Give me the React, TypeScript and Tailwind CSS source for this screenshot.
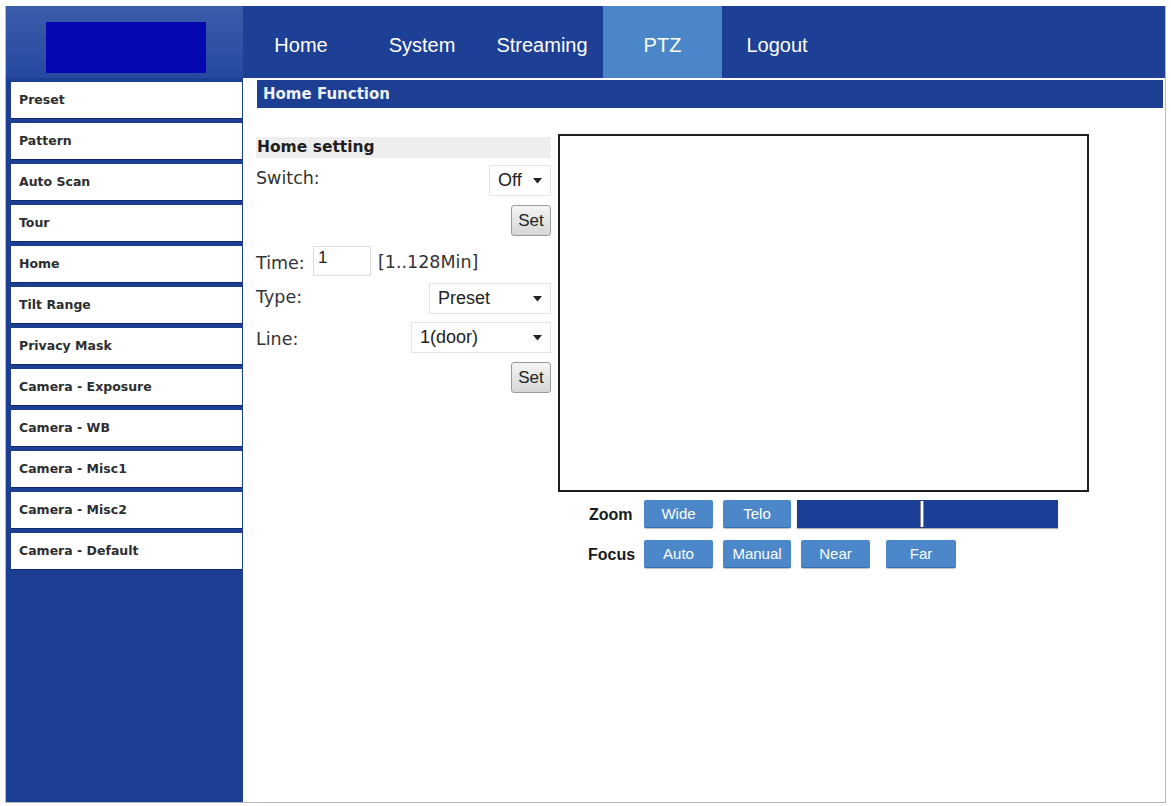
import React from "react";

const MENU = [
  "Preset",
  "Pattern",
  "Auto Scan",
  "Tour",
  "Home",
  "Tilt Range",
  "Privacy Mask",
  "Camera - Exposure",
  "Camera - WB",
  "Camera - Misc1",
  "Camera - Misc2",
  "Camera - Default",
];

const NAV = [
  { label: "Home", cls: "ml-[20px] w-[76px]" },
  { label: "System", cls: "ml-[45px] w-[76px]" },
  { label: "Streaming", cls: "ml-[31px] w-[102px]" },
  { label: "PTZ", cls: "ml-[10px] w-[119px] bg-[#4a86c8]" },
  { label: "Logout", cls: "ml-[15px] w-[80px]" },
];

const verdana = { fontFamily: '"DejaVu Sans", Verdana, sans-serif' };
const arial = { fontFamily: '"Liberation Sans", Arial, sans-serif' };

function Caret() {
  return (
    <svg width="9" height="6" viewBox="0 0 9 6" className="shrink-0">
      <path d="M0 0 H9 L4.5 5.5 Z" fill="#222" />
    </svg>
  );
}

function Select({ value, width }: { value: string; width: string }) {
  return (
    <div
      className={`${width} h-[31px] flex items-center justify-between pl-[8px] pr-[8px] bg-white border border-[#e4e4e4] text-[18px] text-[#222]`}
      style={arial}
    >
      <span>{value}</span>
      <Caret />
    </div>
  );
}

function SetButton() {
  return (
    <button
      className="w-[40px] h-[31px] rounded-[3px] border border-[#9a9a9a] bg-gradient-to-b from-[#f4f4f4] to-[#d6d6d6] text-[17px] text-[#222] leading-none"
      style={arial}
    >
      Set
    </button>
  );
}

function BlueButton({ label, width = "w-[69px]", className = "" }: { label: string; width?: string; className?: string }) {
  return (
    <button
      className={`${width} ${className} h-[28px] rounded-[2px] bg-[#4b87c9] border-b border-[#3a6da8] text-white text-[15px] leading-none shadow-[0_1px_1px_rgba(0,0,0,0.25)]`}
      style={arial}
    >
      {label}
    </button>
  );
}

export default function App() {
  return (
    <div className="w-[1171px] h-[806px] bg-white pl-[5px] pt-[6px] overflow-hidden">
      <div className="w-[1161px] h-[797px] flex flex-col border-x border-b border-[#b8b8c0]">
        {/* top bar */}
        <div className="h-[72px] flex bg-[#1d3f95] shrink-0">
          <div className="w-[237px] h-full bg-gradient-to-b from-[#3a5caa] to-[#2549a0] pl-[40px] pt-[16px]">
            <div className="w-[160px] h-[51px] bg-[#0707b2]" />
          </div>
          <nav className="flex h-full">
            {NAV.map((n) => (
              <div
                key={n.label}
                className={`${n.cls} h-full flex items-center justify-center pt-[6px] text-white text-[20px]`}
                style={arial}
              >
                {n.label}
              </div>
            ))}
          </nav>
        </div>

        <div className="flex flex-1">
          {/* side menu */}
          <aside className="w-[237px] bg-[#1c3f94] pt-[4px] pl-[5px] pr-[1px] flex flex-col gap-[4px]">
            {MENU.map((m) => (
              <div
                key={m}
                className="h-[37px] bg-white border-b border-[#0f2a6e] flex items-center pl-[8px] text-[12.5px] font-bold text-[#2e2e2e]"
                style={verdana}
              >
                {m}
              </div>
            ))}
          </aside>

          {/* main */}
          <main className="flex-1 bg-white pt-[2px] pl-[14px] pr-[2px]">
            <div
              className="h-[28px] bg-[#1c3f94] flex items-center pl-[6px] text-[15px] font-bold text-[#eef1fa]"
              style={verdana}
            >
              Home Function
            </div>

            <div className="flex mt-[26px] ml-[-1px]">
              {/* settings form */}
              <div className="w-[295px] mt-[3px]">
                <div className="h-[21px] bg-[#eeeeee] flex items-center pl-[1px] text-[15.5px] font-bold text-[#1e1e1e]" style={verdana}>
                  Home setting
                </div>

                <div className="mt-[7px] flex justify-between items-start">
                  <span className="text-[17.5px] leading-[26px] text-[#333]" style={verdana}>Switch:</span>
                  <Select value="Off" width="w-[62px]" />
                </div>
                <div className="mt-[9px] flex justify-end">
                  <SetButton />
                </div>

                <div className="mt-[10px] flex items-center h-[30px]">
                  <span className="w-[57px] pt-[4px] text-[17.5px] text-[#333]" style={verdana}>Time:</span>
                  <div className="w-[58px] h-[30px] border border-[#dcdcdc] pl-[4px] text-[17px] leading-[22px] text-[#222]" style={arial}>
                    1
                  </div>
                  <span className="ml-[7px] pt-[3px] text-[17.5px] text-[#333]" style={verdana}>[1..128Min]</span>
                </div>

                <div className="mt-[7px] flex justify-between items-start">
                  <span className="text-[17.5px] leading-[28px] text-[#333]" style={verdana}>Type:</span>
                  <Select value="Preset" width="w-[122px]" />
                </div>
                <div className="mt-[8px] flex justify-between items-start">
                  <span className="pt-[3px] text-[17.5px] leading-[28px] text-[#333]" style={verdana}>Line:</span>
                  <Select value="1(door)" width="w-[140px]" />
                </div>
                <div className="mt-[9px] flex justify-end">
                  <SetButton />
                </div>
              </div>

              {/* video + ptz controls */}
              <div className="ml-[7px]">
                <div className="w-[531px] h-[358px] border-2 border-[#1e1e1e] bg-white" />

                <div className="mt-[8px] flex items-center pl-[31px]">
                  <span className="w-[55px] pt-[2px] text-[16px] font-bold text-[#1a1a1a]" style={arial}>Zoom</span>
                  <BlueButton label="Wide" />
                  <BlueButton label="Telo" width="w-[68px]" className="ml-[10px]" />
                  <div className="ml-[6px] w-[261px] h-[28px] bg-[#1b3f96] flex items-center pl-[123px] shadow-[0_1px_1px_rgba(0,0,0,0.3)]">
                    <div className="w-[4px] h-[26px] bg-white border-x border-[#8a8a8a]" />
                  </div>
                </div>

                <div className="mt-[12px] flex items-center pl-[30px]">
                  <span className="w-[56px] pt-[2px] text-[16px] font-bold text-[#1a1a1a]" style={arial}>Focus</span>
                  <BlueButton label="Auto" />
                  <BlueButton label="Manual" width="w-[68px]" className="ml-[10px]" />
                  <BlueButton label="Near" className="ml-[10px]" />
                  <BlueButton label="Far" width="w-[70px]" className="ml-[16px]" />
                </div>
              </div>
            </div>
          </main>
        </div>
      </div>
    </div>
  );
}
